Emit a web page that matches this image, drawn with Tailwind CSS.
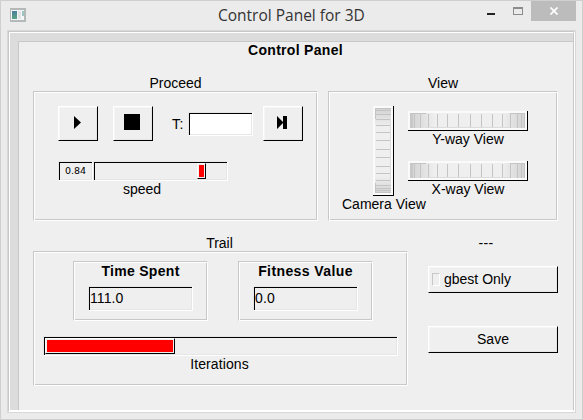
<!DOCTYPE html>
<html lang="en">
<head>
<meta charset="utf-8">
<title>Control Panel for 3D</title>
<script src="https://cdn.jsdelivr.net/npm/@tailwindcss/browser@4"></script>
</head>
<body class="w-[583px] h-[420px] overflow-hidden font-['Liberation_Sans',Arial,sans-serif] text-[14px] leading-[15px] text-black">
<div class="w-[583px] h-[420px] bg-[#ebebeb] border border-[#cfcfcf] flex flex-col">
  <header class="h-[29px] shrink-0 flex items-start">
    <svg class="ml-[9px] mt-[7px]" width="16" height="14" viewBox="0 0 16 14" shape-rendering="crispEdges">
      <defs><linearGradient id="g" x1="0" y1="0" x2="0" y2="1"><stop offset="0" stop-color="#4c7f9f"/><stop offset="1" stop-color="#58a583"/></linearGradient></defs>
      <rect width="16" height="14" fill="#b3b8b9"/><rect x="1" y="2" width="13" height="10" fill="#f5f5f5"/>
      <rect x="2" y="3" width="5" height="8" fill="url(#g)"/><rect x="8" y="3" width="3" height="8" fill="#e2e4e4"/><rect x="12" y="3" width="2" height="5" fill="#9fc5c3"/>
    </svg>
    <h1 class="ml-[192px] mt-[4px] w-[150px] whitespace-nowrap font-['Open_Sans','Noto_Sans',sans-serif] text-[15.500px] leading-[20px] text-[#333]">Control Panel for 3D</h1>
    <div class="ml-[119px] mt-[12px] w-[8px] h-[2px] bg-[#222]"></div>
    <div class="ml-[18px] mt-[6px] w-[10px] h-[8px] border border-t-2 border-[#8c8c8c]"></div>
    <div class="ml-[8px] w-[45px] h-[20px] bg-[#bcbcbc] flex items-center justify-center">
      <svg width="8" height="8" viewBox="0 0 8 8"><path d="M.5 .5L7.500 7.500M7.500 .5L.5 7.500" stroke="#fff" stroke-width="1.700"/></svg>
    </div>
  </header>
  <main class="ml-[6px] w-[569px] h-[383px] border border-[#d8d8d8]">
    <div class="w-[567px] h-[381px] border-t border-l border-[#c8c8c8] border-r border-r-white border-b border-b-white">
      <div class="w-[565px] h-[379px] border-t border-l border-t-white border-l-white border-r border-r-[#c8c8c8] border-b border-b-white bg-[#dcdcdc] pl-[8px] pt-[8px]">
        <div class="w-[555px] h-[369px] bg-[#efefef] border-t border-l border-[#c8c8c8]">
          <h2 class="h-[34px] pt-[1px] pr-px text-center font-bold tracking-[0.3px]">Control Panel</h2>
          <div class="flex pl-[14px]">
            <section class="w-[285px]">
              <h3 class="h-[15px] text-center">Proceed</h3>
              <div class="h-[130px] border border-[#c8c8c8] border-r-white border-b-white shadow-[inset_1px_1px_#fff,inset_-1px_-1px_#c8c8c8] pt-[14px] pl-[24px]">
                <div class="flex">
                  <button class="w-[40px] h-[35px] border border-white border-r-black border-b-black shadow-[inset_1px_1px_#f6f6f6,inset_-1px_-1px_#e6e6e6] pl-[15px]"><svg class="-mt-[2px]" width="7" height="13" viewBox="0 0 7 13"><path d="M0 0L7 6.500L0 13z"/></svg></button>
                  <button class="ml-[15px] w-[40px] h-[35px] border border-white border-r-black border-b-black shadow-[inset_1px_1px_#f6f6f6,inset_-1px_-1px_#e6e6e6] pl-[10px]"><svg class="-mt-[3px]" width="16" height="16"><rect width="16" height="16"/></svg></button>
                  <label class="ml-[19px] mt-[11px] w-[16px] tracking-[0.4px]">T:</label>
                  <div class="mt-[6px] w-[65px] h-[24px] border border-[#e6e6e6] border-r-white border-b-white bg-white shadow-[inset_1px_1px_#000,inset_-1px_-1px_#e6e6e6]"></div>
                  <button class="ml-[10px] w-[40px] h-[35px] border border-white border-r-black border-b-black shadow-[inset_1px_1px_#f6f6f6,inset_-1px_-1px_#e6e6e6] pl-[13px]"><svg class="-mt-[2px]" width="10" height="13" viewBox="0 0 10 13"><path d="M0 0L6 6V0H10V13H6V7L0 13z"/></svg></button>
                </div>
                <div class="mt-[20px] flex">
                  <div class="w-[35px] h-[20px] border border-[#e6e6e6] border-r-white border-b-white shadow-[inset_1px_1px_#000,inset_-1px_-1px_#e6e6e6] text-[9.500px] leading-[18px] text-center font-['DejaVu_Sans',sans-serif]">0.84</div>
                  <div class="w-[135px] h-[20px] border border-[#e6e6e6] border-r-white border-b-white shadow-[inset_1px_1px_#000,inset_-1px_-1px_#e6e6e6] pl-[103px] pt-px">
                    <div class="w-[9px] h-[16px] border border-white border-r-black border-b-black p-px"><div class="w-[5px] h-[12px] bg-[#f00]"></div></div>
                  </div>
                </div>
                <p class="pl-[65px] mt-px">speed</p>
              </div>
            </section>
            <section class="ml-[10px] w-[230px]">
              <h3 class="h-[15px] text-center">View</h3>
              <div class="h-[130px] border border-[#c8c8c8] border-r-white border-b-white shadow-[inset_1px_1px_#fff,inset_-1px_-1px_#c8c8c8] flex pl-[13px] pt-[14px]">
                <div class="w-[66px]">
                  <svg class="ml-[31px]" width="21" height="90" viewBox="0 0 21 90" shape-rendering="crispEdges">
                    <defs><linearGradient id="v" x1="0" y1="0" x2="0" y2="1"><stop offset="0" stop-color="#d2d2d2"/><stop offset=".22" stop-color="#efefef"/><stop offset=".8" stop-color="#efefef"/><stop offset="1" stop-color="#d2d2d2"/></linearGradient></defs>
                    <path d="M0 0H20V89H0z" fill="#fafafa"/><path d="M2 2H18V87H2z" fill="url(#v)"/>
                    <path d="M17.500 13V77" stroke="#dcdcdc"/>
                    <path d="M2.500 2V13M2.500 77V87M2 2.500H18M3 4.500H18M3 8.500H18M3 13.500H17M3 19.500H17M3 26.500H17M3 34.500H17M3 43.500H17M3 51.500H17M3 60.500H17M3 67.500H17M3 74.500H17M3 79.500H18M3 82.500H18M3 84.500H18M3 86.500H18" stroke="#c4c4c4"/>
                    <path d="M20.500 0V90M0 89.500H21" stroke="#000"/>
                  </svg>
                  <p class="mt-[1px] whitespace-nowrap">Camera View</p>
                </div>
                <div class="pt-[5px] w-[120px] text-center">
                  <svg width="120" height="20" viewBox="0 0 120 20" shape-rendering="crispEdges">
                    <defs><linearGradient id="h"><stop offset="0" stop-color="#d2d2d2"/><stop offset=".22" stop-color="#efefef"/><stop offset=".8" stop-color="#efefef"/><stop offset="1" stop-color="#d2d2d2"/></linearGradient></defs>
                    <g id="wheel">
                    <path d="M0 0H119V19H0z" fill="#fafafa"/><path d="M2 2H117V17H2z" fill="url(#h)"/><path d="M2 2H5V17H2z" fill="#c8c8c8"/>
                    <path d="M18 16.500H102" stroke="#dcdcdc"/>
                    <path d="M2 2.500H18M102 2.500H117M6.500 3V17M12.500 3V17M20.500 3V16M29.500 3V16M39.500 3V16M50.500 3V16M62.500 3V16M73.500 3V16M84.500 3V16M94.500 3V16M102.500 3V17M109.500 3V17M113.500 3V17M116.500 3V17" stroke="#c4c4c4"/>
                    <path d="M119.500 0V20M0 19.500H120" stroke="#000"/></g>
                  </svg>
                  <p class="h-[30px] pt-px">Y-way View</p>
                  <svg width="120" height="20" viewBox="0 0 120 20" shape-rendering="crispEdges"><use href="#wheel"/></svg>
                  <p class="pt-px">X-way View</p>
                </div>
              </div>
            </section>
          </div>
          <div class="flex pl-[14px] mt-[15px]">
            <section class="w-[375px]">
              <h3 class="h-[15px] pr-[2px] text-center">Trail</h3>
              <div class="h-[135px] border border-[#c8c8c8] border-r-white border-b-white shadow-[inset_1px_1px_#fff,inset_-1px_-1px_#c8c8c8] pl-[9px] pt-[9px]">
                <div class="flex gap-[30px] pl-[30px]">
                  <div class="w-[135px] h-[60px] border border-[#c8c8c8] border-r-white border-b-white shadow-[inset_1px_1px_#fff,inset_-1px_-1px_#c8c8c8] px-[14px] pt-[2px]">
                    <h4 class="h-[22px] text-center font-bold whitespace-nowrap tracking-[0.3px]">Time Spent</h4>
                    <div class="w-[105px] h-[25px] border border-[#e6e6e6] border-r-white border-b-white shadow-[inset_1px_1px_#000,inset_-1px_-1px_#e6e6e6] pl-px leading-[23px] tracking-[0.1px]">111.0</div>
                  </div>
                  <div class="w-[135px] h-[60px] border border-[#c8c8c8] border-r-white border-b-white shadow-[inset_1px_1px_#fff,inset_-1px_-1px_#c8c8c8] px-[14px] pt-[2px]">
                    <h4 class="h-[22px] text-center font-bold whitespace-nowrap tracking-[0.4px]">Fitness Value</h4>
                    <div class="w-[105px] h-[25px] border border-[#e6e6e6] border-r-white border-b-white shadow-[inset_1px_1px_#000,inset_-1px_-1px_#e6e6e6] pl-px leading-[23px] tracking-[0.1px]">0.0</div>
                  </div>
                </div>
                <div class="mt-[15px] w-[355px] h-[20px] border border-[#e6e6e6] border-r-white border-b-white shadow-[inset_1px_1px_#000,inset_-1px_-1px_#e6e6e6] pl-px pt-px">
                  <div class="w-[130px] h-[16px] border border-white border-r-black border-b-black p-px"><div class="w-[126px] h-[12px] bg-[#f00]"></div></div>
                </div>
                <p class="mt-px w-[353px] text-center tracking-[0.1px]">Iterations</p>
              </div>
            </section>
            <section class="ml-[20px] w-[130px]">
              <p class="h-[30px] pr-[14px] text-center tracking-[0.4px]">---</p>
              <div class="w-[130px] h-[27px] border border-white border-r-black border-b-black shadow-[inset_1px_1px_#f6f6f6,inset_-1px_-1px_#e6e6e6] flex items-center pl-[3px]">
                <span class="w-[8px] h-[13px] border border-[#c8c8c8] border-r-white border-b-white"></span><span class="ml-[4px] whitespace-nowrap">gbest Only</span>
              </div>
              <button class="mt-[33px] w-[130px] h-[27px] border border-white border-r-black border-b-black shadow-[inset_1px_1px_#f6f6f6,inset_-1px_-1px_#e6e6e6]">Save</button>
            </section>
          </div>
        </div>
      </div>
    </div>
  </main>
</div>
</body>
</html>
